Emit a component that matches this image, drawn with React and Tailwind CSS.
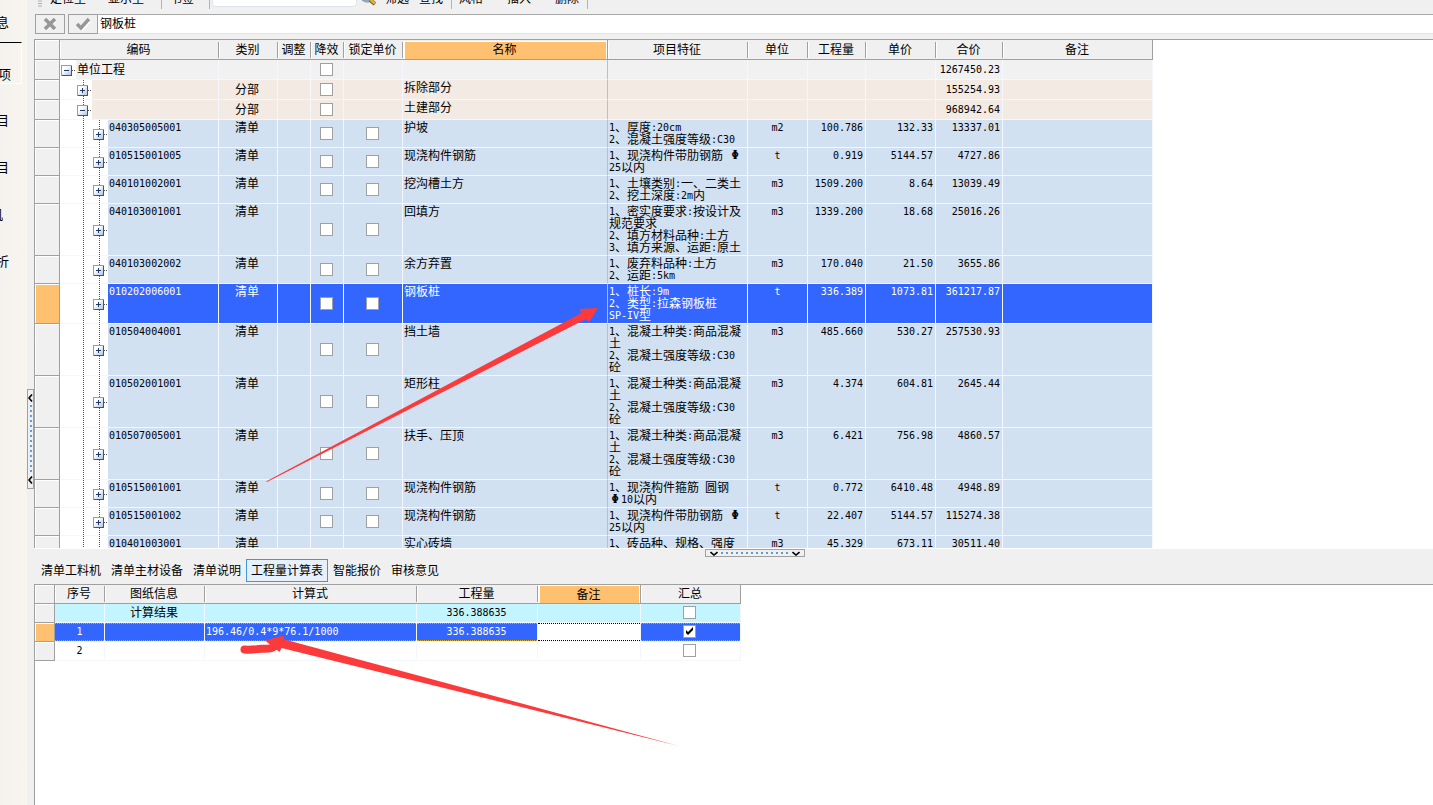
import React from "react";

const ITEMS = [
  { level: 0, size: "sm", open: true, label: "单位工程", total: "1267450.23" },
  { level: 1, size: "sm", kind: "分部", name: "拆除部分", total: "155254.93" },
  { level: 1, size: "sm", open: true, kind: "分部", name: "土建部分", total: "968942.64" },
  { level: 2, size: "md", code: "040305005001", kind: "清单", name: "护坡", features: ["1、厚度:20cm", "2、混凝土强度等级:C30"], unit: "m2", qty: "100.786", price: "132.33", total: "13337.01" },
  { level: 2, size: "md", code: "010515001005", kind: "清单", name: "现浇构件钢筋", features: ["1、现浇构件带肋钢筋 Φ", "25以内"], unit: "t", qty: "0.919", price: "5144.57", total: "4727.86" },
  { level: 2, size: "md", code: "040101002001", kind: "清单", name: "挖沟槽土方", features: ["1、土壤类别:一、二类土", "2、挖土深度:2m内"], unit: "m3", qty: "1509.200", price: "8.64", total: "13039.49" },
  { level: 2, size: "xl", code: "040103001001", kind: "清单", name: "回填方", features: ["1、密实度要求:按设计及", "规范要求", "2、填方材料品种:土方", "3、填方来源、运距:原土"], unit: "m3", qty: "1339.200", price: "18.68", total: "25016.26" },
  { level: 2, size: "md", code: "040103002002", kind: "清单", name: "余方弃置", features: ["1、废弃料品种:土方", "2、运距:5km"], unit: "m3", qty: "170.040", price: "21.50", total: "3655.86" },
  { level: 2, size: "lg", selected: true, code: "010202006001", kind: "清单", name: "钢板桩", features: ["1、桩长:9m", "2、类型:拉森钢板桩", "SP-IV型"], unit: "t", qty: "336.389", price: "1073.81", total: "361217.87" },
  { level: 2, size: "xl", code: "010504004001", kind: "清单", name: "挡土墙", features: ["1、混凝土种类:商品混凝", "土", "2、混凝土强度等级:C30", "砼"], unit: "m3", qty: "485.660", price: "530.27", total: "257530.93" },
  { level: 2, size: "xl", code: "010502001001", kind: "清单", name: "矩形柱", features: ["1、混凝土种类:商品混凝", "土", "2、混凝土强度等级:C30", "砼"], unit: "m3", qty: "4.374", price: "604.81", total: "2645.44" },
  { level: 2, size: "xl", code: "010507005001", kind: "清单", name: "扶手、压顶", features: ["1、混凝土种类:商品混凝", "土", "2、混凝土强度等级:C30", "砼"], unit: "m3", qty: "6.421", price: "756.98", total: "4860.57" },
  { level: 2, size: "md", code: "010515001001", kind: "清单", name: "现浇构件钢筋", features: ["1、现浇构件箍筋 圆钢", "Φ10以内"], unit: "t", qty: "0.772", price: "6410.48", total: "4948.89" },
  { level: 2, size: "md", code: "010515001002", kind: "清单", name: "现浇构件钢筋", features: ["1、现浇构件带肋钢筋 Φ", "25以内"], unit: "t", qty: "22.407", price: "5144.57", total: "115274.38" },
  { level: 2, size: "xl", code: "010401003001", kind: "清单", name: "实心砖墙", features: ["1、砖品种、规格、强度"], unit: "m3", qty: "45.329", price: "673.11", total: "30511.40" },
];

const ROW_H = { sm: "h-[20px]", md: "h-[28px]", lg: "h-[40px]", xl: "h-[52px]" };
const CELL_H = { sm: "h-[19px]", md: "h-[27px]", lg: "h-[39px]", xl: "h-[51px]" };
const LEVEL_BG = ["bg-[#f1f1f1]", "bg-[#f2eae3]", "bg-[#d2e1f2]"];

/* Chinese text at 12px; half-width runs in a monospace face with a 6px advance. */
function T({ children }) {
  const parts = String(children).split(/(Φ|[\x20-\x7e]+)/).filter(Boolean);
  return parts.map((p, i) => {
    if (p === "Φ")
      return <b key={i} className="inline-block w-[12px] text-center align-[1px] font-['DejaVu_Sans_Mono',monospace] text-[12px] leading-[0]">Φ</b>;
    if (/^[\x20-\x7e]/.test(p))
      return <span key={i} className="whitespace-pre align-[1px] font-['DejaVu_Sans_Mono',monospace] text-[10px] leading-[0]">{p}</span>;
    return <React.Fragment key={i}>{p}</React.Fragment>;
  });
}

function Check({ label, checked = false }) {
  return (
    <span className="relative block size-[13px]">
      <input type="checkbox" aria-label={label} defaultChecked={checked} className="peer block size-[13px] appearance-none border border-[#a0a0a0] bg-white" />
      <svg viewBox="0 0 13 13" className="pointer-events-none absolute inset-0 hidden size-[13px] peer-checked:block" aria-hidden="true">
        <path d="M3 5v3l2 2 5-5V2L5 7z" fill="#000" />
      </svg>
    </span>
  );
}

function Toggle({ open }) {
  return (
    <button aria-label={open ? "折叠" : "展开"} className="absolute left-px top-1/2 -mt-[5px] block size-[11px]">
      <svg viewBox="0 0 11 11" className="block size-[11px]" shapeRendering="crispEdges">
        <defs>
          <linearGradient id="tg" x1="0" y1="0" x2="1" y2="1">
            <stop offset="0.3" stopColor="#fff" />
            <stop offset="1" stopColor="#b4c4e4" />
          </linearGradient>
        </defs>
        <rect width="11" height="11" fill="#3f5578" />
        <path d="M0 0h11v1H1v10H0z" fill="#8c9dbd" />
        <rect x="1" y="1" width="9" height="9" fill="url(#tg)" />
        <path d="M3 5h5v1H3z" fill="#1d3a66" />
        {!open && <path d="M5 3h1v5H5z" fill="#1d3a66" />}
      </svg>
    </button>
  );
}

function Gutter({ item }) {
  const line = <span className="absolute inset-y-0 left-[7px] border-l border-dotted border-[#555]" />;
  return (
    <>
      {item.level >= 1 && <span className="w-4 shrink-0 bg-white" />}
      {item.level >= 2 && <span className="relative w-4 shrink-0 bg-white">{line}</span>}
      <span className="relative w-4 shrink-0 bg-white">
        {item.level > 0 && line}
        <span className="absolute left-[12px] top-1/2 w-[3px] border-t border-dotted border-[#555]" />
        <Toggle open={item.open} />
      </span>
    </>
  );
}

const CELL = "border-b border-r border-[#f4f7fd] p-0";

function Item({ item }) {
  const deep = item.level === 2;
  const bg = item.selected ? "bg-[#3366ff] text-white" : LEVEL_BG[item.level];
  const v = deep ? "align-top pt-px" : "align-middle pb-[2px]";
  const num = `${CELL} ${v} pr-[2px] text-right`;
  return (
    <tr className={`${ROW_H[item.size]} ${bg}`}>
      <th scope="row" className="border-b border-r border-[#a0a0a0] bg-[#f0f0f0] p-0 align-top">
        <div className={`border-l border-t border-white ${CELL_H[item.size]} ${item.selected ? "bg-[#ffc06f]" : ""}`} />
      </th>
      <td className={`${CELL} align-top`}>
        <div className={`flex ${CELL_H[item.size]}`}>
          <Gutter item={item} />
          <span className={deep ? "pl-px pt-px" : "self-center pb-[2px] pl-px"}>
            <T>{item.code || item.label || ""}</T>
          </span>
        </div>
      </td>
      <td className={`${CELL} ${v} pr-[2px] text-center`}>{item.kind}</td>
      <td className={CELL} />
      <td className={`${CELL} align-middle`}>
        <span className="flex justify-center pr-px"><Check label="降效" /></span>
      </td>
      <td className={`${CELL} align-middle`}>
        {deep && <span className="flex justify-center pr-[2px]"><Check label="锁定单价" /></span>}
      </td>
      <td className="border-b border-r border-b-[#f4f7fd] border-r-[#a6c3e6] p-0 pl-px pt-px align-top">{item.name}</td>
      <td className={`${CELL} whitespace-nowrap pl-px pt-px align-top`}>
        {(item.features || []).map((f, i) => <div key={i}><T>{f}</T></div>)}
      </td>
      <td className={`${CELL} ${v} text-center`}><T>{item.unit || ""}</T></td>
      <td className={num}><T>{item.qty || ""}</T></td>
      <td className={num}><T>{item.price || ""}</T></td>
      <td className={num}><T>{item.total}</T></td>
      <td className={CELL} />
    </tr>
  );
}

function Head({ children, active, last }) {
  return (
    <th scope="col" className={`border-b border-t border-[#a0a0a0] bg-[#f0f0f0] p-0 font-normal ${active || last ? "border-r" : ""}`}>
      {active ? (
        <div className="flex h-[18px] items-center justify-center border-l-2 border-r border-t border-white bg-[#ffc06f] pb-[2px] pr-[2px]">{children}</div>
      ) : (
        <div className={`flex h-[16px] items-center justify-center border-l border-l-white pb-[2px] pr-[2px] ${last ? "" : "border-r border-r-[#a0a0a0]"}`}>{children}</div>
      )}
    </th>
  );
}

const CORNER = "border-b border-r border-t border-[#a0a0a0] bg-[#f0f0f0] p-0 shadow-[inset_1px_1px_0_#fff]";

function ItemsTable() {
  return (
    <table className="w-[1119px] table-fixed border-separate border-spacing-0 border-l border-[#a0a0a0]">
      <colgroup>
        <col className="w-[25px]" /><col className="w-[159px]" /><col className="w-[59px]" />
        <col className="w-[33px]" /><col className="w-[33px]" /><col className="w-[59px]" />
        <col className="w-[205px]" /><col className="w-[140px]" /><col className="w-[60px]" />
        <col className="w-[58px]" /><col className="w-[70px]" /><col className="w-[67px]" /><col className="w-[150px]" />
      </colgroup>
      <thead>
        <tr className="h-[21px]">
          <td className={CORNER} />
          <Head>编码</Head><Head>类别</Head><Head>调整</Head><Head>降效</Head><Head>锁定单价</Head>
          <Head active>名称</Head><Head>项目特征</Head><Head>单位</Head><Head>工程量</Head>
          <Head>单价</Head><Head>合价</Head><Head last>备注</Head>
        </tr>
      </thead>
      <tbody>{ITEMS.map((it, i) => <Item key={i} item={it} />)}</tbody>
    </table>
  );
}

const CALC = [
  { tone: "result", info: "计算结果", qty: "336.388635" },
  { tone: "selected", no: "1", expr: "196.46/0.4*9*76.1/1000", qty: "336.388635", checked: true },
  { tone: "plain", no: "2" },
];

function CalcTable() {
  return (
    <table className="w-[707px] table-fixed border-separate border-spacing-0 border-l border-[#a0a0a0]">
      <colgroup>
        <col className="w-[20px]" /><col className="w-[50px]" /><col className="w-[100px]" /><col className="w-[212px]" />
        <col className="w-[121px]" /><col className="w-[103px]" /><col className="w-[100px]" />
      </colgroup>
      <thead>
        <tr className="h-[20px]">
          <td className={CORNER} />
          <Head>序号</Head><Head>图纸信息</Head><Head>计算式</Head><Head>工程量</Head><Head active>备注</Head><Head last>汇总</Head>
        </tr>
      </thead>
      <tbody>
        {CALC.map((r, i) => {
          const sel = r.tone === "selected";
          const bg = sel ? "bg-[#3366ff] text-white" : r.tone === "result" ? "bg-[#c2f5ff]" : "bg-white";
          const box = `flex h-[18px] items-center pb-[2px] ${sel ? "border-y border-dotted border-[#d9a520]" : ""}`;
          return (
            <tr key={i} className={`h-[19px] ${bg}`}>
              <th scope="row" className="border-b border-r border-[#a0a0a0] bg-[#f0f0f0] p-0">
                <div className={`h-[18px] border-l border-t border-white ${sel ? "bg-[#ffc06f]" : ""}`} />
              </th>
              <td className={CELL}><div className={`${box} justify-center`}><span><T>{r.no || ""}</T></span></div></td>
              <td className={CELL}><div className={`${box} justify-center pr-px`}>{r.info}</div></td>
              <td className={CELL}><div className={`${box} pl-px`}><span><T>{r.expr || ""}</T></span></div></td>
              <td className={CELL}><div className={`${box} justify-center pr-px`}><span><T>{r.qty || ""}</T></span></div></td>
              <td className={CELL}>{sel && <div className="h-[18px] border-y border-dotted border-black bg-white" />}</td>
              <td className={CELL}><div className={`${box} justify-center pr-[2px]`}><Check label="汇总" checked={r.checked} /></div></td>
            </tr>
          );
        })}
      </tbody>
    </table>
  );
}

const TABS = ["清单工料机", "清单主材设备", "清单说明", "工程量计算表", "智能报价", "审核意见"];

function Toolbar() {
  const sep = "h-[9px] w-px self-start bg-[#b4b4b4]";
  const btn = "block pb-[10px]";
  return (
    <div className="flex h-[14px] shrink-0 items-end whitespace-nowrap">
      <svg viewBox="0 0 4 7" className="mx-[4px] h-[7px] w-[4px] self-start" aria-hidden="true">
        <path d="M0 1h4M0 3.5h4M0 6h4" stroke="#b0b0b0" />
      </svg>
      <button className={`${btn} ml-[4px]`}>定位至</button>
      <button className={`${btn} ml-[22px]`}>显示至</button>
      <span className={`${sep} ml-[17px]`} />
      <button className={`${btn} ml-[8px]`}>书签</button>
      <span className={`${sep} ml-[15px]`} />
      <input aria-label="查找内容" className="ml-[2px] h-[7px] w-[145px] self-start rounded-b-sm border-x border-b border-[#dfe4ee] bg-white" />
      <svg viewBox="0 0 16 7" className="ml-[5px] h-[7px] w-[16px] self-start" aria-hidden="true">
        <path d="M0 0h9c-1 3-6 3-9 0z" fill="#9fb4c8" stroke="#6f8496" strokeWidth="0.6" />
        <path d="M8 0l5 4" stroke="#6b5b3a" strokeWidth="4" />
        <path d="M8.5 0l4.5 3.5" stroke="#e8b53a" strokeWidth="2.4" />
      </svg>
      <button className={`${btn} ml-[7px]`}>筛选</button>
      <button className={`${btn} ml-[10px]`}>查找</button>
      <span className={`${sep} ml-[8px]`} />
      <button className={`${btn} ml-[7px]`}>风格</button>
      <button className={`${btn} ml-[24px]`}>插入</button>
      <button className={`${btn} ml-[24px]`}>删除</button>
      <span className={`${sep} ml-[8px]`} />
    </div>
  );
}

function FormulaBar() {
  const btn = "flex h-[20px] w-[30px] items-center justify-center border border-[#a0a0a0]";
  return (
    <div className="flex h-[20px] shrink-0 pl-px">
      <button aria-label="取消" className={btn}>
        <svg viewBox="0 0 14 14" className="size-[14px]">
          <path d="M3 3l9.500 9.500M12.500 3L3 12.500" stroke="#fff" strokeWidth="3.6" />
          <path d="M2 2l10 10M12 2L2 12" stroke="#989898" strokeWidth="3.600" />
        </svg>
      </button>
      <button aria-label="确定" className={`${btn} ml-[3px]`}>
        <svg viewBox="0 0 14 14" className="size-[14px]">
          <path d="M2 8l4 4 8-9" fill="none" stroke="#fff" strokeWidth="3.6" />
          <path d="M1 7l4 4 8-9" fill="none" stroke="#989898" strokeWidth="3.600" />
        </svg>
      </button>
      <input aria-label="单元格内容" defaultValue="钢板桩" className="min-w-0 flex-1 border-b border-t border-b-[#e4e4e8] border-t-[#a8a8a8] bg-white px-[2px] pb-[2px] text-[12px] leading-[16px] outline-none" />
    </div>
  );
}

function SideNav() {
  const link = "flex h-[47px] items-center justify-end overflow-hidden text-[13px]";
  return (
    <nav className="flex w-[27px] shrink-0 flex-col bg-linear-to-r from-[#f4f2ee] to-[#f8f5ee]">
      <a href="#info" className="flex h-[42px] w-[9px] items-center justify-end overflow-hidden pt-[2px] text-[13px]">息</a>
      <div className="h-[42px] w-[22px] border-b border-r border-t border-b-white border-r-white border-t-black">
        <a href="#item" className="flex h-[40px] w-[11px] items-end justify-end overflow-hidden pb-[3px] text-[13px]">项</a>
      </div>
      <div className="h-[12px]" />
      <a href="#measure" className={`${link} w-[9px]`}>目</a>
      <a href="#other" className={`${link} w-[9px]`}>目</a>
      <a href="#resource" className={`${link} w-[3px]`}>机</a>
      <a href="#discount" className={`${link} w-[9px]`}>折</a>
    </nav>
  );
}

export default function App() {
  return (
    <div className="relative flex h-screen overflow-hidden bg-[#f0f0f0] font-['Noto_Sans_CJK_SC',sans-serif] text-[12px] leading-[12px] text-black">
      <SideNav />
      <div className="flex w-[7px] shrink-0 flex-col">
        <div className="grow-[389]" />
        <button aria-label="收起左侧面板" className="flex h-[100px] flex-col items-center justify-between border border-[#a0a0a0] py-[4px]">
          <svg viewBox="0 0 5 8" className="h-[8px] w-[5px]"><path d="M4 0.500L1 4l3 3.500" fill="none" stroke="#000" strokeWidth="1.600" /></svg>
          <svg viewBox="0 0 2 68" className="h-[68px] w-[2px]" shapeRendering="crispEdges"><path d="M1 0v68" stroke="#5b9be0" strokeWidth="2" strokeDasharray="2 3" /></svg>
          <svg viewBox="0 0 5 8" className="h-[8px] w-[5px]"><path d="M4 0.500L1 4l3 3.500" fill="none" stroke="#000" strokeWidth="1.600" /></svg>
        </button>
        <div className="grow-[316]" />
      </div>
      <main className="flex min-w-0 flex-1 flex-col">
        <Toolbar />
        <FormulaBar />
        <section className="mt-[5px] min-h-0 flex-1 overflow-hidden border-b border-white bg-white">
          <div className="relative">
            <div className="absolute inset-x-0 top-0 h-px bg-[#a0a0a0]" />
            <ItemsTable />
          </div>
        </section>
        <section className="flex h-[256px] shrink-0 flex-col">
          <button aria-label="收起下方面板" className="ml-[671px] flex h-[8px] w-[100px] items-center justify-between border border-[#a0a0a0] px-[4px]">
            <svg viewBox="0 0 8 5" className="h-[5px] w-[8px]"><path d="M0.500 1L4 4l3.500-3" fill="none" stroke="#000" strokeWidth="1.600" /></svg>
            <svg viewBox="0 0 68 2" className="h-[2px] w-[68px]" shapeRendering="crispEdges"><path d="M0 1h68" stroke="#5b9be0" strokeWidth="2" strokeDasharray="2 3" /></svg>
            <svg viewBox="0 0 8 5" className="h-[5px] w-[8px]"><path d="M0.500 1L4 4l3.500-3" fill="none" stroke="#000" strokeWidth="1.600" /></svg>
          </button>
          <div role="tablist" className="flex h-[27px] items-center pl-[2px]">
            {TABS.map((t) => {
              const on = t === "工程量计算表";
              return (
                <button key={t} role="tab" aria-selected={on} className={`h-[23px] border px-[4px] pb-[2px] ${on ? "border-[#3c96ee] bg-[#e5f0fb]" : "border-transparent"}`}>
                  {t}
                </button>
              );
            })}
          </div>
          <div className="relative min-h-0 flex-1 overflow-hidden border-l border-[#a0a0a0] bg-white">
            <div className="absolute inset-x-0 top-0 h-px bg-[#a0a0a0]" />
            <div className="relative -ml-px"><CalcTable /></div>
          </div>
        </section>
      </main>
      <svg viewBox="0 0 1433 805" className="pointer-events-none absolute left-0 top-0 h-[805px] w-[1433px]" fill="#fb3b3b" aria-hidden="true">
        <path d="M266 481.500L581.500 313l-2-4L598 308l-9 14.500-3-3.500L267 482z" />
        <path d="M265 640.500l18-5 1.500 4L678 745.700 281.500 648l-2 4z" />
        <path d="M244.500 649.500c5 .5 9 0 14-.5s9 .5 13-1l4-2" fill="none" stroke="#fb3b3b" strokeWidth="8" strokeLinecap="round" />
      </svg>
    </div>
  );
}
